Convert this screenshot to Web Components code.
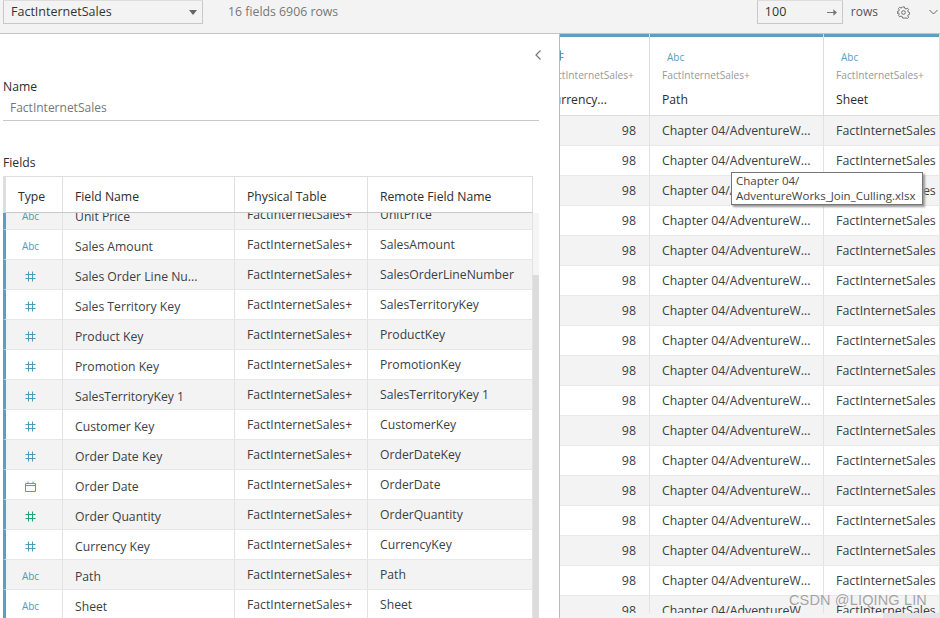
<!DOCTYPE html>
<html>
<head>
<meta charset="utf-8">
<title>FactInternetSales</title>
<style>
  html, body { margin: 0; height: 100%; overflow: hidden; background: #fff; }
  body { font-family: "Open Sans", "Liberation Sans", sans-serif; font-size: 12.5px; color: #3a3f45; }
  app-shell { height: 618px; }
</style>
</head>
<body>
<app-shell>
  <top-bar slot="top"></top-bar>
  <meta-panel slot="left"></meta-panel>
  <data-grid slot="right"></data-grid>
</app-shell>

<script>
const ICONS = {
  hash: c => `<svg width="11" height="11" viewBox="0 0 11 11" fill="none" stroke="${c}" stroke-width="1"><path d="M3.5 0.5v10M7.5 0.5v10M0.5 3.5h10M0.5 7.5h10"/></svg>`,
  date: c => `<svg width="11" height="11" viewBox="0 0 11 11" fill="none" stroke="${c}" stroke-width="1"><path d="M.5 2.5h10v8H.5zM.5 4.5h10M3 .5v2M8 .5v2"/></svg>`,
  gear: `<svg width="13" height="13" viewBox="0 0 14 14" fill="none" stroke="#666" stroke-width="1"><circle cx="7" cy="7" r="2"/><path d="M6 1h2l.4 1.600 1.300.6 1.500-.8 1.300 1.400-.9 1.400.5 1.300 1.500.5v1.900l-1.500.5-.5 1.300.9 1.400-1.300 1.400-1.500-.8-1.300.6L8 13H6l-.4-1.600-1.300-.6-1.500.8-1.300-1.400.9-1.400-.5-1.300L.4 7.900V6l1.500-.5.5-1.300-.9-1.400L2.800 1.400l1.500.8 1.300-.6z"/></svg>`
};
const typeIcon = t => {
  if (t === 'abc') return '<span class="abc">Abc</span>';
  if (t === 'date') return ICONS.date('#4aa0c0');
  if (t === 'measure') return ICONS.hash('#1fa37a');
  return ICONS.hash('#4f9ab8');
};

customElements.define('app-shell', class extends HTMLElement {
  connectedCallback() {
    this.attachShadow({mode: 'open'}).innerHTML = `
      <style>
        :host { display: grid; grid-template-columns: 560px 380px; grid-template-rows: 34px 1fr; width: 940px; overflow: hidden; position: relative; }
        .top { grid-column: 1 / 3; }
        .left, .right { min-height: 0; overflow: hidden; }
        .left { border-right: 1px solid #b9b9b9; }
      </style>
      <div class="top"><slot name="top"></slot></div>
      <div class="left"><slot name="left"></slot></div>
      <div class="right"><slot name="right"></slot></div>`;
  }
});

customElements.define('top-bar', class extends HTMLElement {
  connectedCallback() {
    this.attachShadow({mode: 'open'}).innerHTML = `
      <style>
        :host { display: flex; align-items: flex-start; height: 34px; box-sizing: border-box; background: #f3f3f3; border-bottom: 1px solid #c4c4c4; padding: 0 2px 0 3px; line-height: 24px; }
        .select { width: 200px; height: 24px; box-sizing: border-box; border: 1px solid #c8c8c8; border-top-color: #ddd; display: flex; align-items: center; justify-content: space-between; padding: 0 5px 0 7px; color: #333; }
        .select i { width: 0; height: 0; border: 4px solid transparent; border-top: 5px solid #666; border-bottom: 0; }
        .count { margin-left: 25px; color: #777; font-size: 12.300px; }
        .limit { margin-left: auto; width: 86px; height: 24px; box-sizing: border-box; border: 1px solid #c8c8c8; border-top-color: #ddd; display: flex; align-items: center; justify-content: space-between; padding: 0 5px 0 7px; color: #333; }
        .rows { margin-left: 8px; color: #555; font-size: 12px; }
        .gear { margin-left: 19px; height: 24px; display: flex; align-items: center; }
        .chev { margin-left: 19px; height: 24px; display: flex; align-items: center; }
      </style>
      <div class="select">FactInternetSales<i></i></div>
      <div class="count">16 fields 6906 rows</div>
      <div class="limit">100
        <svg width="10" height="7" viewBox="0 0 11 7" fill="#777"><path d="M0 3h7V0l4 3.500L7 7V4H0z"/></svg></div>
      <div class="rows">rows</div>
      <div class="gear">${ICONS.gear}</div>
      <div class="chev"><svg width="9" height="6" viewBox="0 0 9 6" fill="none" stroke="#666"><path d="M.5 1l4 4 4-4"/></svg></div>`;
  }
});

const FIELDS = [
  ['abc', 'Unit Price', 'UnitPrice'],
  ['abc', 'Sales Amount', 'SalesAmount'],
  ['num', 'Sales Order Line Nu...', 'SalesOrderLineNumber'],
  ['num', 'Sales Territory Key', 'SalesTerritoryKey'],
  ['num', 'Product Key', 'ProductKey'],
  ['num', 'Promotion Key', 'PromotionKey'],
  ['num', 'SalesTerritoryKey 1', 'SalesTerritoryKey 1'],
  ['num', 'Customer Key', 'CustomerKey'],
  ['num', 'Order Date Key', 'OrderDateKey'],
  ['date', 'Order Date', 'OrderDate'],
  ['measure', 'Order Quantity', 'OrderQuantity'],
  ['num', 'Currency Key', 'CurrencyKey'],
  ['abc', 'Path', 'Path'],
  ['abc', 'Sheet', 'Sheet'],
];

customElements.define('meta-panel', class extends HTMLElement {
  connectedCallback() {
    this.attachShadow({mode: 'open'}).innerHTML = `
      <style>
        :host { display: block; height: 584px; overflow: hidden; background: #fff; position: relative; }
        .back { display: flex; justify-content: flex-end; padding: 16px 18px 0 0; height: 28px; box-sizing: border-box; }
        .label { font-weight: 500; color: #2c2c2c; padding-left: 3px; font-size: 12.200px; }
        .name { margin: 3px 20px 0 3px; padding: 0 0 2px 7px; border-bottom: 1px solid #c8c8c8; color: #777; line-height: 20px; font-size: 12px; }
        .back + .label { margin-top: 16px; }
        .fields { margin-top: 33px; }
        .wrap { margin: 5px 0 0 3px; width: 536px; height: 442px; overflow: hidden; position: relative; }
        .table { width: 530px; }
        .hdr, .row { display: grid; grid-template-columns: 57px 172px 133px 165px; }
        .hdr { height: 37px; box-sizing: border-box; border: 1px solid #dedede; border-left-width: 3px; border-bottom: 1px solid #c9c9c9; background: #fff; position: relative; z-index: 2; }
        .hdr div { display: flex; align-items: center; padding: 3px 0 0 12px; font-weight: 500; color: #2c2c2c; font-size: 12.200px; border-right: 1px solid #e0e0e0; }
        .hdr div:last-child { border-right: 0; }
        .body { margin-top: -13px; }
        .row { height: 30px; box-sizing: border-box; border-bottom: 1px solid #e6e6e6; border-left: 3px solid #5c9fc2; }
        .row:nth-child(odd) { background: #f3f3f3; }
        .row div { display: flex; align-items: center; border-right: 1px solid #e2e2e2; padding: 3px 0 0 12px; box-sizing: border-box; white-space: nowrap; font-size: 12.200px; }
        .row .t { justify-content: center; padding: 3px 7px 0 0; }
        .row .up { padding-top: 0; }
        .abc { color: #5b96b2; font-size: 10px; }
        .track { position: absolute; left: 530px; top: 37px; width: 6px; bottom: 0; background: #f5f5f5; }
        .thumb { position: absolute; left: 0; right: 0; top: 62px; bottom: 0; background: #dcdcdc; }
      </style>
      <div class="back"><svg width="6" height="10" viewBox="0 0 6 10" fill="none" stroke="#777" stroke-width="1.200"><path d="M5.500 .5L1 5l4.500 4.500"/></svg></div>
      <div class="label">Name</div>
      <div class="name">FactInternetSales</div>
      <div class="label fields">Fields</div>
      <div class="wrap">
        <div class="table">
          <div class="hdr"><div>Type</div><div>Field Name</div><div>Physical Table</div><div>Remote Field Name</div></div>
          <div class="body">${FIELDS.map(f => `<div class="row">
            <div class="t">${typeIcon(f[0])}</div><div>${f[1]}</div><div class="up">FactInternetSales+</div><div class="up">${f[2]}</div>
          </div>`).join('')}</div>
        </div>
        <div class="track"><div class="thumb"></div></div>
      </div>`;
  }
});

customElements.define('data-grid', class extends HTMLElement {
  connectedCallback() {
    const heads = [['num', 'Currency...', 'FactInternetSales+'], ['abc', 'Path', 'FactInternetSales+'], ['abc', 'Sheet', 'FactInternetSales+']];
    let rows = '';
    for (let i = 0; i < 17; i++) {
      rows += `<div class="row"><div class="n">98</div><div class="p">Chapter 04/AdventureW...</div><div>FactInternetSales</div></div>`;
    }
    this.attachShadow({mode: 'open'}).innerHTML = `
      <style>
        :host { display: block; height: 584px; background: #f3f3f3; position: relative; overflow: hidden; }
        .view { height: 579px; overflow: hidden; background: #fff; }
        .heads, .row { display: grid; grid-template-columns: 90px 174px 116px; }
        .heads { height: 82px; box-sizing: border-box; border-bottom: 1px solid #dcdcdc; }
        .h { border-right: 1px solid #dcdcdc; white-space: nowrap; overflow: hidden; }
        .bar { height: 3px; background: #5c9fc2; }
        .in { padding: 11px 0 0 12px; }
        .h:first-child .in { margin-left: -14px; padding-left: 0; }
        .ty { height: 14px; padding-left: 5px; }
        .h:first-child .ty { padding-left: 7px; }
        .tb { color: #999; font-size: 10.200px; margin-top: 6px; }
        .nm { font-weight: 500; color: #2c2c2c; margin-top: 9px; font-size: 12.200px; }
        .abc { color: #5a9fc0; font-size: 10px; }
        .row { height: 30px; box-sizing: border-box; border-bottom: 1px solid #e8e8e8; }
        .row:nth-child(odd) { background: #f3f3f3; }
        .row div { display: flex; align-items: center; padding-left: 12px; border-right: 1px solid #e2e2e2; white-space: nowrap; font-size: 12.400px; color: #3a3f45; }
        .row .n { justify-content: flex-end; padding-right: 13px; }
        .row .p { font-size: 12.300px; }
        .hbar { display: flex; justify-content: flex-end; height: 5px; }
        .hbar i { width: 57px; background: #e4e4e4; }
        .tip { position: absolute; left: 171px; top: 138px; width: 192px; height: 33px; box-sizing: border-box; border: 1px solid #777; background: #fff; box-shadow: 2px 2px 2px #999; padding: 0 4px; font-size: 11.500px; line-height: 15px; color: #444; white-space: nowrap; }
        .mark { position: absolute; left: 229px; top: 558px; font-family: "Liberation Sans", sans-serif; font-size: 14.500px; color: rgba(110, 110, 110, .6); letter-spacing: .15px; white-space: nowrap; }
      </style>
      <div class="view">
        <div class="heads">${heads.map(h => `<div class="h"><div class="bar"></div><div class="in"><div class="ty">${typeIcon(h[0])}</div><div class="tb">${h[2]}</div><div class="nm">${h[1]}</div></div></div>`).join('')}</div>
        <div>${rows}</div>
      </div>
      <div class="hbar"><i></i></div>
      <div class="tip">Chapter 04/<br>AdventureWorks_Join_Culling.xlsx</div>
      <div class="mark">CSDN @LIQING LIN</div>`;
  }
});
</script>
</body>
</html>
